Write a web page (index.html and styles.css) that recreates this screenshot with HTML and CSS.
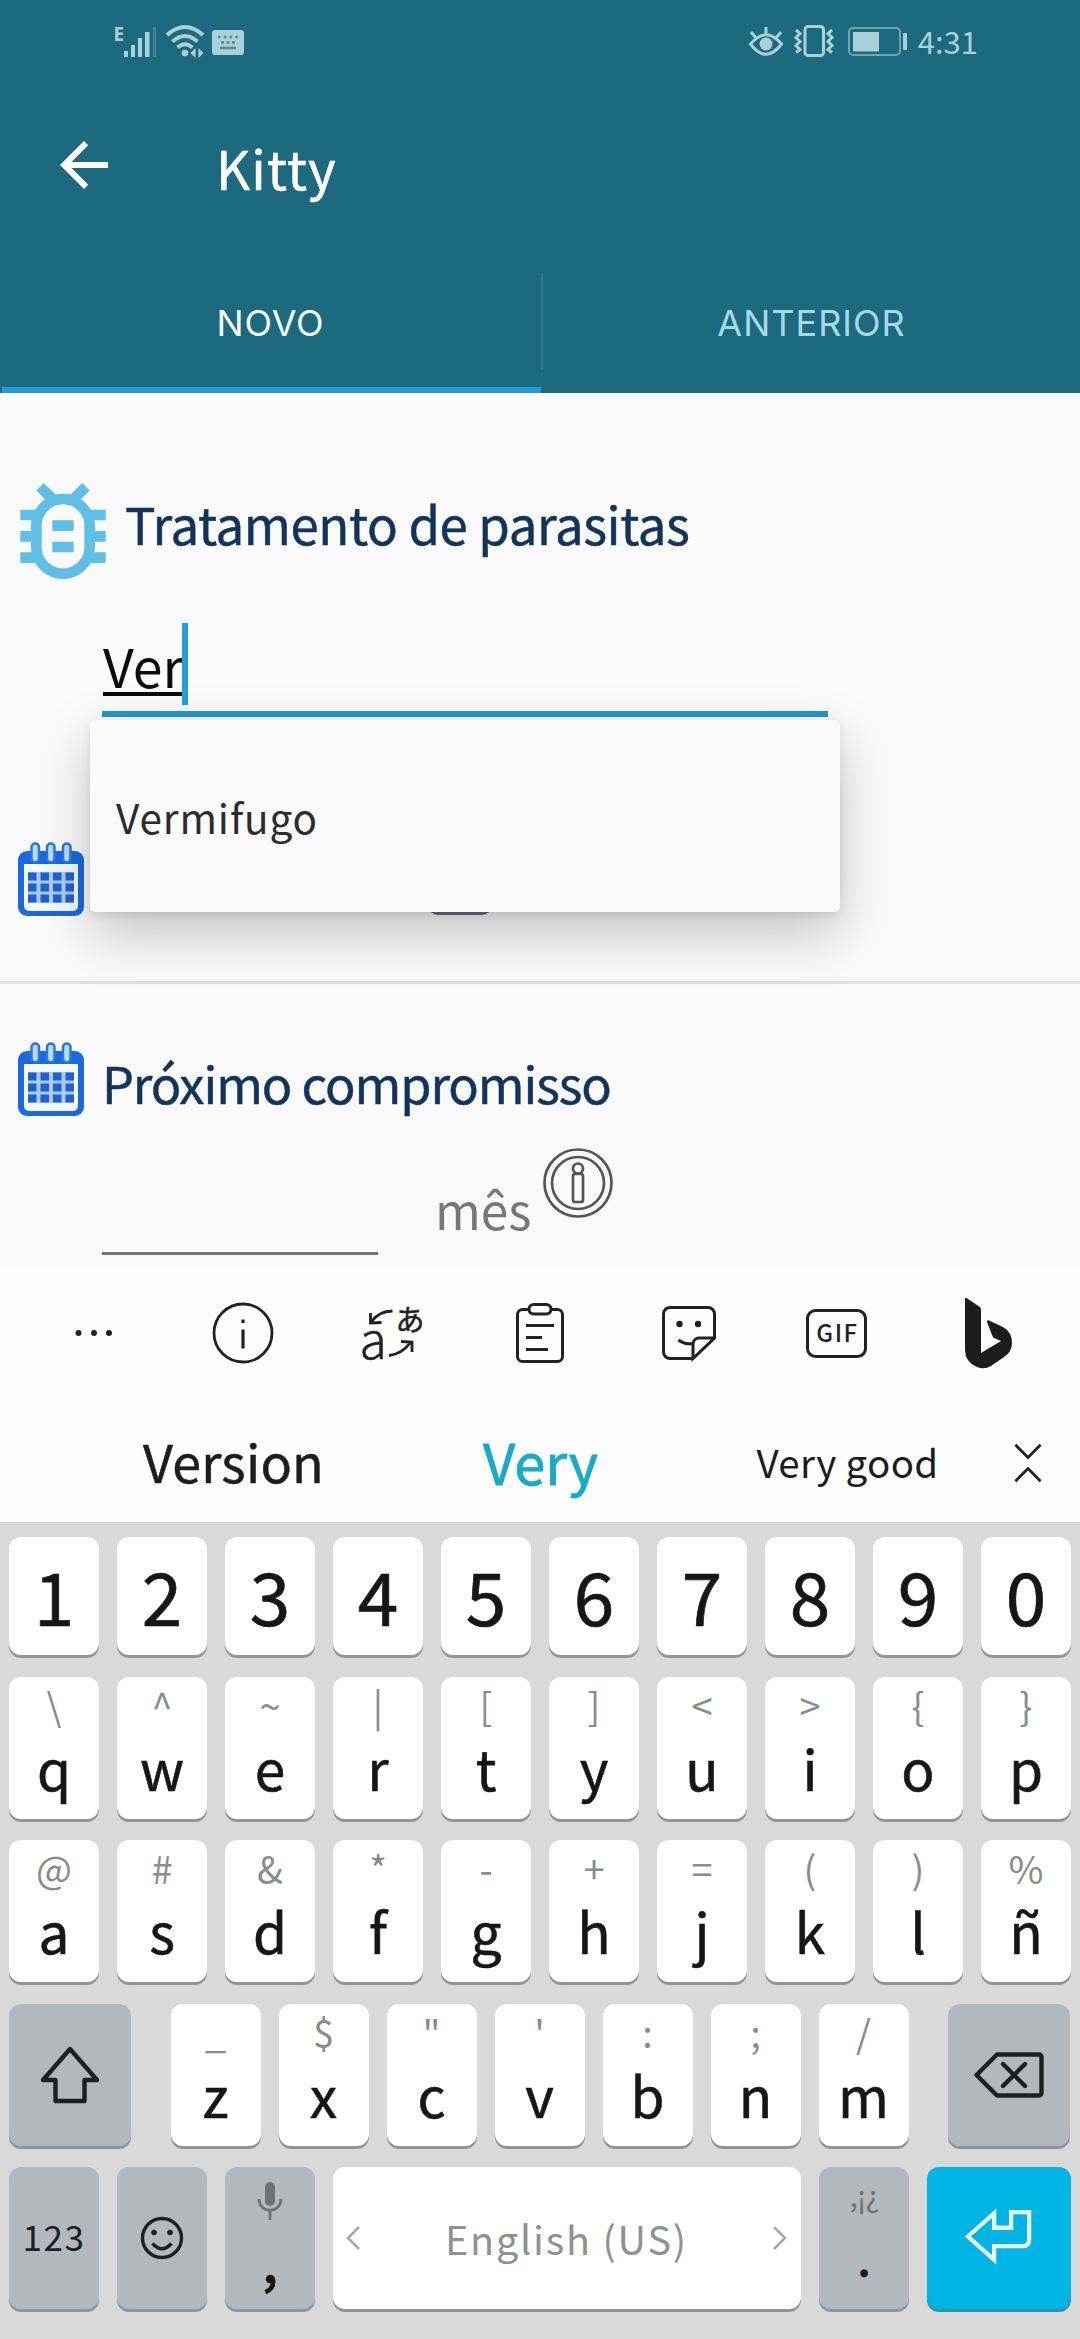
FILE: index.html
```html
<!DOCTYPE html>
<html lang="pt">
<head>
<meta charset="utf-8">
<title>Kitty</title>
<link rel="stylesheet" href="styles.css">
</head>
<body>
<header class="header">
  <div class="status">
    <div class="status-left">
      <svg width="44" height="34" viewBox="0 0 44 34">
        <text x="-0.5" y="17" class="net">E</text>
        <g fill="#a9d0d9"><rect x="10" y="27" width="4" height="6"/><rect x="17" y="21" width="4" height="12"/><rect x="24" y="14" width="4" height="19"/><rect x="31" y="8" width="4.500" height="25"/><rect x="39" y="3" width="3" height="30" opacity=".25"/></g>
      </svg>
      <svg width="40" height="34" viewBox="0 0 40 34" fill="none" stroke="#a9d0d9" stroke-width="4">
        <path d="M2 11Q20 -5 38 11M7.500 17.500Q20 6.500 32.500 17.500M12.500 23.500Q20 17 27.500 23.500"/>
        <circle cx="20" cy="29" r="3.300" fill="#a9d0d9" stroke="none"/>
        <path d="M30.500 24v10l-5-5zM33.500 24v10l5-5z" fill="#a9d0d9" stroke="none"/>
      </svg>
      <svg width="32" height="34" viewBox="0 0 32 34">
        <rect y="6" width="32" height="25" rx="3" fill="#a9d0d9"/>
        <path d="M6 13h20" stroke="#4f8c9b" stroke-width="2.500" stroke-dasharray="2.500 3.300"/>
        <path d="M9 18.500h14" stroke="#4f8c9b" stroke-width="2.500" stroke-dasharray="3 2.500"/>
        <path d="M8 24h16" stroke="#4f8c9b" stroke-width="2.500"/>
      </svg>
    </div>
    <div class="status-right">
      <svg width="34" height="34" viewBox="0 0 34 34" fill="none" stroke="#a9d0d9" stroke-width="3">
        <path d="M1.500 20Q17 1.500 32.500 20Q17 40.500 1.500 20Z"/><circle cx="17" cy="20" r="6.500" fill="#a9d0d9" stroke="none"/>
        <path d="M17 3v7M2 8l5 6M32 8l-5 6"/>
      </svg>
      <svg class="vibrate" width="40" height="34" viewBox="0 0 40 34" fill="none" stroke="#a9d0d9" stroke-width="3">
        <rect x="11" y="2.500" width="18.500" height="29" rx="3"/>
        <path d="M2 6l4 3.500-4 4 4 4-4 4 4 4-4 3M38 6l-4 3.500 4 4-4 4 4 4-4 4 4 3"/>
      </svg>
      <svg class="battery" width="60" height="34" viewBox="0 0 60 34">
        <rect x="1" y="4" width="51" height="27" rx="4" fill="none" stroke="#6fa5b2" stroke-width="2"/>
        <rect x="5" y="8" width="26" height="19.500" fill="#a9d0d9"/><rect x="55" y="9" width="4" height="17" rx="1" fill="#a9d0d9"/>
      </svg>
      <span class="time">4:31</span>
    </div>
  </div>
  <div class="appbar">
    <svg class="back" width="72" height="72" viewBox="0 0 24 24" fill="#fff"><path d="M20 11H7.830l5.590-5.590L12 4l-8 8 8 8 1.410-1.410L7.830 13H20z"/></svg>
    <h1 class="title">Kitty</h1>
  </div>
  <nav class="tabs">
    <div class="tab tab-active">NOVO</div>
    <div class="tab-divider"></div>
    <div class="tab">ANTERIOR</div>
  </nav>
</header>

<svg width="0" height="0" class="defs">
  <symbol id="cal" viewBox="0 0 66 74">
    <path d="M9 9H57a9 9 0 0 1 9 9V65a9 9 0 0 1-9 9H9a9 9 0 0 1-9-9V18a9 9 0 0 1 9-9z" fill="#1b69e0"/>
    <path d="M6 22H60V64a5 5 0 0 1-5 5H11a5 5 0 0 1-5-5z" fill="#f4f9ff"/>
    <g fill="#b9dcff" stroke="#2b74e2" stroke-width="2.500"><rect x="13.500" y="1.500" width="7.500" height="19" rx="3.700"/><rect x="29" y="1.500" width="7.500" height="19" rx="3.700"/><rect x="45" y="1.500" width="7.500" height="19" rx="3.700"/></g>
    <rect x="10" y="30" width="46" height="31" fill="#a9cdfa"/>
    <path d="M10 34.500h46M10 45.500h46M10 56.500h46" stroke="#2060cf" stroke-width="8" stroke-dasharray="8.500 4"/>
  </symbol>
</svg>

<main class="content">
  <section class="heading">
    <svg class="bug" width="128" height="128" viewBox="0 0 24 24" fill="#5fbfe6"><path d="M20 8h-2.810c-.45-.78-1.070-1.450-1.820-1.960L17 4.410 15.590 3l-2.170 2.170C12.960 5.060 12.490 5 12 5s-.96.060-1.410.17L8.410 3 7 4.410l1.620 1.630C7.880 6.550 7.260 7.220 6.810 8H4v2h2.090c-.05.33-.09.66-.09 1v1H4v2h2v1c0 .34.040.67.090 1H4v2h2.810c1.040 1.790 2.970 3 5.190 3s4.150-1.210 5.190-3H20v-2h-2.090c.05-.33.09-.66.09-1v-1h2v-2h-2v-1c0-.34-.04-.67-.09-1H20V8zm-4 4v3c0 .22-.03.47-.07.7l-.1.650-.37.650c-.72 1.240-2.040 2-3.460 2s-2.740-.77-3.460-2l-.37-.64-.1-.65C8.030 15.480 8 15.230 8 15v-4c0-.23.030-.48.070-.7l.1-.65.370-.65c.3-.52.720-.97 1.210-1.310l.57-.39.740-.18c.31-.08.63-.12.940-.12.320 0 .63.040.950.120l.68.160.61.420c.5.340.910.780 1.210 1.310l.38.650.1.650c.04.220.07.470.07.690v1zm-6 2h4v2h-4zm0-4h4v2h-4z"/></svg>
    <h2 class="h-parasites">Tratamento de parasitas</h2>
  </section>

  <div class="field">
    <span class="field-text">Ver</span><span class="caret"></span>
    <div class="popup"><span>Vermifugo</span></div>
  </div>

  <div class="date-row"><svg width="66" height="74"><use href="#cal"/></svg><span class="dash"></span></div>
  <hr class="rule">
  <div class="next-row">
    <svg width="66" height="74"><use href="#cal"/></svg>
    <h2 class="h-next">Próximo compromisso</h2>
  </div>
  <div class="interval">
    <div class="interval-input"></div>
    <span class="unit">mês</span>
    <svg class="info" width="72" height="72" viewBox="0 0 72 72" fill="none" stroke="#555" stroke-width="2.700">
      <circle cx="36" cy="36" r="33.500"/><circle cx="36" cy="36" r="26"/><circle cx="36" cy="21.500" r="5"/><rect x="31" y="27" width="10" height="28" rx="2"/>
    </svg>
  </div>
</main>

<section class="tools">
  <div class="tool"><svg width="72" height="72" viewBox="0 0 72 72" fill="#222"><circle cx="20.500" cy="36" r="3"/><circle cx="36" cy="36" r="3"/><circle cx="51" cy="36" r="3"/></svg></div>
  <div class="tool"><svg width="72" height="72" viewBox="0 0 72 72" fill="none" stroke="#222" stroke-width="2.800"><circle cx="36" cy="36" r="29"/><path d="M36 32.500v19M36 22.500v3.500" stroke-width="3.200"/></svg></div>
  <div class="tool"><svg width="72" height="72" viewBox="0 0 72 72" fill="none" stroke="#222" stroke-width="2.800"><text x="4.500" y="62" class="tr-a">a</text><text x="40.500" y="34" class="tr-j">あ</text><path d="M37.500 14Q24 14 16 25M15.500 16v10l11-.5M34 58.500Q47 57 55 46M46 44.500l11 .5V55"/></svg></div>
  <div class="tool"><svg width="72" height="72" viewBox="0 0 72 72" fill="none" stroke="#222" stroke-width="3"><path d="M25 12.500H18.500a5 5 0 0 0-5 5V59.500a5 5 0 0 0 5 5H53.500a5 5 0 0 0 5-5V17.500a5 5 0 0 0-5-5H47"/><rect x="25" y="7.500" width="22" height="9.500" rx="4.700"/><path d="M22 28.500h28M22 40.500h16M22 52.500h22"/></svg></div>
  <div class="tool"><svg width="72" height="72" viewBox="0 0 72 72" fill="none" stroke="#222" stroke-width="3"><path d="M40 61.500H17a6.500 6.500 0 0 1-6.500-6.500V17a6.500 6.500 0 0 1 6.500-6.500H55a6.500 6.500 0 0 1 6.500 6.500V41L40 61.500V47a6 6 0 0 1 6-6H61.500"/><path d="M25.500 43Q32 48 40 46.500"/><circle cx="26.500" cy="27" r="3.200" fill="#222" stroke="none"/><circle cx="45" cy="27" r="3.200" fill="#222" stroke="none"/></svg></div>
  <div class="tool"><svg width="72" height="72" viewBox="0 0 72 72"><rect x="6.500" y="13.500" width="58" height="46" rx="8" fill="none" stroke="#222" stroke-width="3"/><text x="36.500" y="45" class="gif">GIF</text></svg></div>
  <div class="tool"><svg class="bing" width="72" height="72" viewBox="0 0 72 72" fill="#1c1c1c"><path d="M17 2Q17 .5 18.500 1L32 10Q33 11 33 13V56L53 44 46 41Q44.500 40 44 38L39 25Q38.500 22.500 41 23.500L55 30Q64 35 64 46 64 55 56 60L43 69Q36 73 29 70 17 65 17 53z"/></svg></div>
</section>

<section class="suggest">
  <span class="s-a">Version</span><span class="s-b">Very</span><span class="s-c">Very good</span>
  <svg class="collapse" width="28" height="40" viewBox="0 0 30 42" fill="none" stroke="#222" stroke-width="3"><path d="M1.500 1.500L15 15 28.500 1.500M1.500 40.500L15 27 28.500 40.500"/></svg>
</section>

<section class="keyboard">
  <div class="row digits"><div class="key">1</div><div class="key">2</div><div class="key">3</div><div class="key">4</div><div class="key">5</div><div class="key">6</div><div class="key">7</div><div class="key">8</div><div class="key">9</div><div class="key">0</div></div>
  <div class="row">
    <div class="key"><i>\</i><b>q</b></div><div class="key"><i>^</i><b>w</b></div><div class="key"><i>~</i><b>e</b></div><div class="key"><i>|</i><b>r</b></div><div class="key"><i>[</i><b>t</b></div><div class="key"><i>]</i><b>y</b></div><div class="key"><i>&lt;</i><b>u</b></div><div class="key"><i>&gt;</i><b>i</b></div><div class="key"><i>{</i><b>o</b></div><div class="key"><i>}</i><b>p</b></div>
  </div>
  <div class="row">
    <div class="key"><i>@</i><b>a</b></div><div class="key"><i>#</i><b>s</b></div><div class="key"><i>&amp;</i><b>d</b></div><div class="key"><i>*</i><b>f</b></div><div class="key"><i>-</i><b>g</b></div><div class="key"><i>+</i><b>h</b></div><div class="key"><i>=</i><b>j</b></div><div class="key"><i>(</i><b>k</b></div><div class="key"><i>)</i><b>l</b></div><div class="key"><i>%</i><b>ñ</b></div>
  </div>
  <div class="row row-shift">
    <div class="key grey wide"><svg width="60" height="58" viewBox="0 0 60 58" fill="none" stroke="#1b2023" stroke-width="4.400"><path d="M30 3L57 34H44.500V55H15.500V34H3z" stroke-linejoin="round"/></svg></div>
    <div class="letters"><div class="key"><i>_</i><b>z</b></div><div class="key"><i>$</i><b>x</b></div><div class="key"><i>"</i><b>c</b></div><div class="key"><i>'</i><b>v</b></div><div class="key"><i>:</i><b>b</b></div><div class="key"><i>;</i><b>n</b></div><div class="key"><i>/</i><b>m</b></div></div>
    <div class="key grey wide"><svg width="70" height="46" viewBox="0 0 70 46" fill="none" stroke="#1b2023" stroke-width="4.400" stroke-linejoin="round"><path d="M23 2.500H65a2.500 2.500 0 0 1 2.500 2.500V41a2.500 2.500 0 0 1-2.500 2.500H23L2.500 23z"/><path d="M29 12L51 34M51 12L29 34" stroke-linecap="round"/></svg></div>
  </div>
  <div class="row">
    <div class="key grey num">123</div>
    <div class="key grey mid"><svg width="44" height="44" viewBox="0 0 44 44" fill="none" stroke="#1b2023" stroke-width="3.400"><circle cx="22" cy="22" r="19.500"/><path d="M12.500 27.500Q22 38 31.500 27.500"/><circle cx="14" cy="16.500" r="2.800" fill="#1b2023" stroke="none"/><circle cx="30" cy="16.500" r="2.800" fill="#1b2023" stroke="none"/></svg></div>
    <div class="key grey mic"><svg width="26" height="40" viewBox="0 0 26 40"><rect x="8" y="1" width="10" height="24" rx="5" fill="#6d7276"/><path d="M2 18a11 11.500 0 0 0 22 0M13 30v9" fill="none" stroke="#6d7276" stroke-width="2.800"/></svg><b class="punct">,</b></div>
    <div class="key space"><svg width="15" height="24" viewBox="0 0 15 24" fill="none" stroke="#a8a8a8" stroke-width="2.500"><path d="M13 1L2 12 13 23"/></svg><span>English (US)</span><svg width="15" height="24" viewBox="0 0 15 24" fill="none" stroke="#a8a8a8" stroke-width="2.500"><path d="M2 1L13 12 2 23"/></svg></div>
    <div class="key grey"><i class="marks">,¡¿</i><b class="punct dot">.</b></div>
    <div class="key enter"><svg width="68" height="55" viewBox="0 0 70 56" fill="none" stroke="#e9fbff" stroke-width="4.400"><path d="M3 28L30 4V19H47.500V3H66V31Q66 38 59 38H30V52z"/></svg></div>
  </div>
</section>
</body>
</html>
```
FILE: styles.css
```css
* { box-sizing: border-box; }
body { margin: 0; width: 1080px; height: 2339px; overflow: hidden; background: #fefefe; font-family: "Noto Sans CJK SC", "Noto Sans", sans-serif; color: #222; }
svg { display: block; flex: none; overflow: visible; }
h1, h2 { margin: 0; font-weight: 400; white-space: nowrap; }
.defs { position: absolute; }

.header { height: 393px; background: #1d697d; color: #fff; }
.status { height: 82px; display: flex; justify-content: space-between; align-items: center; padding: 0 102px 0 114px; color: #a9d0d9; }
.status-left, .status-right { display: flex; align-items: center; }
.status-left { gap: 7px; }
.net { font: 700 19px "Noto Sans", sans-serif; fill: #a9d0d9; }
.vibrate { margin-left: 11px; }
.battery { margin-left: 14px; }
.time { font-size: 31px; line-height: 82px; margin-left: 10px; }
.appbar { height: 166px; display: flex; align-items: center; padding-left: 48px; }
.title { margin-left: 96px; padding-top: 3px; font-size: 53px; line-height: 60px; letter-spacing: 1.1px; -webkit-text-stroke: .5px; }
.tabs { height: 145px; display: flex; }
.tab { flex: 1; padding-top: 6px; border-bottom: 6px solid transparent; text-align: center; line-height: 139px; font-family: Inter, sans-serif; font-size: 36px; letter-spacing: 1px; color: #a5dbe8; }
.tab-active { color: #f2fdff; border-color: #1f9cd8; margin-left: 2px; padding-right: 2px; letter-spacing: .8px; }
.tab-divider { width: 2px; height: 97px; margin-top: 25px; background: #37798b; }

.content { height: 874px; padding-top: 74px; background: #fafafa; overflow: hidden; }
.heading { height: 128px; display: flex; align-items: center; }
.bug { margin-left: -1px; }
.h-parasites { font-size: 51px; line-height: 60px; letter-spacing: -0.450px; margin: 0 0 16px -2px; color: #12345a; -webkit-text-stroke: .5px; }
.field { position: relative; width: 726px; height: 122px; margin-left: 102px; padding-top: 28px; display: flex; border-bottom: 6px solid #2196d0; font-size: 53.500px; line-height: 84px; color: #0c0c0c; }
.field-text { padding-left: 1px; text-decoration: underline; text-decoration-thickness: 3.500px; text-underline-offset: 4px; text-decoration-skip-ink: none; }
.caret { width: 6px; height: 82px; margin-left: -1px; background: #22a0da; }
.popup { position: absolute; z-index: 2; left: -12px; top: 125px; width: 750px; height: 192px; padding: 0 26px; border-radius: 5px; background: #fafafa; box-shadow: 0 22px 56px rgba(0,0,0,.22), 0 3px 8px rgba(0,0,0,.1); color: #2c2c2c; font-size: 40.500px; letter-spacing: .9px; line-height: 194px; }
.date-row { height: 74px; margin-top: 125px; padding-left: 18px; display: flex; align-items: flex-end; }
.dash { width: 64px; height: 10px; margin: 0 0 1px 344px; border-radius: 0 0 10px 10px; background: #5d7080; }
.rule { height: 3px; margin: 65px 0 0; border: 0; background: #e0e0e0; }
.next-row { height: 74px; margin-top: 58px; padding-left: 18px; display: flex; align-items: center; }
.h-next { margin-left: 18px; padding-top: 6px; font-size: 50.500px; line-height: 60px; letter-spacing: -1.1px; color: #12345a; -webkit-text-stroke: .5px; }
.interval { height: 139px; padding-left: 102px; display: flex; }
.interval-input { width: 276px; border-bottom: 3px solid #777; }
.unit { width: 106px; margin: 63px 0 0 57px; font-size: 49.500px; line-height: 60px; color: #777; }
.info { margin: 31px 0 0 1px; }

.tools { height: 132px; padding: 0 20px; display: flex; align-items: center; }
.tool { flex: 1; display: flex; justify-content: center; }
.bing { margin-right: 4px; }
.tr-a { font-size: 50px; font-weight: 300; fill: #222; stroke: #222; stroke-width: .5px; }
.tr-j { font: 29px "Noto Sans CJK JP", sans-serif; fill: #222; stroke: #222; stroke-width: .5px; }
.gif { font: 500 24px "Noto Sans CJK SC", sans-serif; text-anchor: middle; letter-spacing: 1.500px; fill: #222; }
.suggest { height: 123px; padding-left: 80px; display: grid; grid-template-columns: 307px 307px 307px 55px; align-items: center; justify-items: center; line-height: 70px; color: #1c1c1c; }
.s-a { font-size: 52px; letter-spacing: .2px; padding-top: 1px; -webkit-text-stroke: .5px; }
.s-b { font-size: 56px; color: #18aacb; -webkit-text-stroke: .8px; }
.s-c { font-size: 38.500px; letter-spacing: .3px; }
.collapse { margin: 4px 1px 0 0; }

.keyboard { height: 817px; padding: 15px 10px 0 9px; background: #d9d9d9; display: flex; flex-direction: column; gap: 21.500px; color: #161616; }
.row { height: 142px; display: grid; grid-template-columns: repeat(10, 90px); column-gap: 18px; }
.row:last-child { grid-template-columns: 90px 90px 90px 468px 90px 144px; }
.row-shift { display: flex; justify-content: space-between; }
.letters { display: flex; gap: 18px; }
.key { height: 100%; width: 90px; border-radius: 12px; background: #fff; box-shadow: 0 3px 0 #929497; display: flex; flex-direction: column; align-items: center; }
.key i { font-style: normal; font-size: 38px; line-height: 55px; height: 55px; color: #8c8c8c; }
.key b { font-weight: 400; font-size: 55px; line-height: 71px; -webkit-text-stroke: .6px; }
.digits { height: 118px; }
.digits .key { font-size: 73px; line-height: 114px; -webkit-text-stroke: .7px; }
.grey { background: #b3b8be; }
.wide { width: 122px; justify-content: center; }
.mid { justify-content: center; }
.num { font-size: 35px; line-height: 138px; letter-spacing: 1.500px; color: #1b2023; }
.mic { padding-top: 14px; }
.mic .punct { margin-top: 3px; }
.key .punct { font-size: 54px; font-weight: 500; }
.key .dot { font-size: 44px; }
.key .marks { font-size: 30px; color: #6d7276; letter-spacing: -1px; }
.space { width: 468px; flex-direction: row; justify-content: space-between; padding: 0 14px 0 13px; font-size: 39.500px; letter-spacing: 1.800px; color: #919191; line-height: 60px; }
.space span { padding-bottom: 1px; }
.enter { width: 144px; justify-content: center; padding: 0 0 3px 0; background: #00b5e3; box-shadow: 0 3px 0 #2d93ad; }
```
